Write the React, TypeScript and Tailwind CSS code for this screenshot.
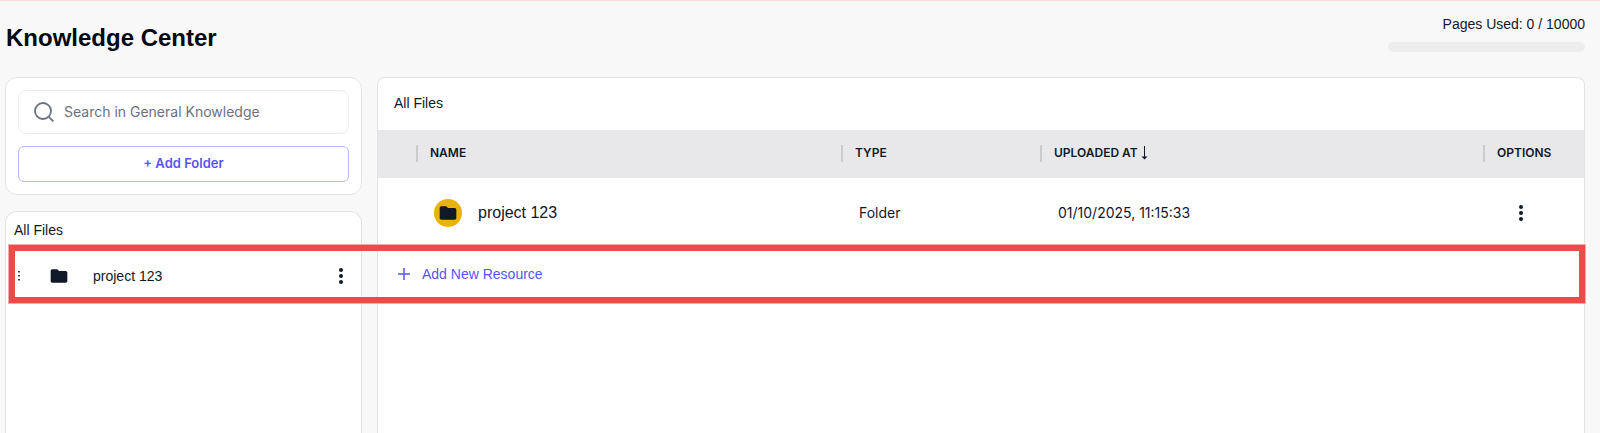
import { MdFolder } from 'react-icons/md'

const files = [{ name: 'project 123', type: 'Folder', uploadedAt: '01/10/2025, 11:15:33' }]

function Dots({ className }: { className?: string }) {
  return (
    <svg viewBox="0 0 4 16" className={className} fill="currentColor" aria-hidden="true">
      <circle cx="2" cy="2" r="2" />
      <circle cx="2" cy="8" r="2" />
      <circle cx="2" cy="14" r="2" />
    </svg>
  )
}

function GripDots() {
  return (
    <svg viewBox="0 0 2 10" className="w-[2px] h-[10px] ml-1" fill="currentColor" aria-hidden="true">
      <path d="M.2 0h1.6v1.6H.2zM.2 4h1.6v1.6H.2zM.2 8h1.6v1.6H.2z" />
    </svg>
  )
}

function SearchIcon() {
  return (
    <svg viewBox="0 0 20 20" className="w-5 h-5 shrink-0 text-gray-500" fill="none" stroke="currentColor" strokeWidth="1.8" aria-hidden="true">
      <circle cx="9" cy="9" r="8" />
      <path d="M14.8 14.8 19.4 19.4" />
    </svg>
  )
}

function HeaderCell({ label, sorted }: { label: string; sorted?: boolean }) {
  return (
    <th scope="col" className="p-0 font-semibold text-left">
      <div className="flex items-center h-12 pb-[2px]">
        <span className="w-[2px] h-[17px] mr-3 bg-[#cbcbcd]" />
        <span>{label}</span>
        {sorted && (
          <svg viewBox="0 0 8 14" className="w-2 h-[14px] ml-[2px]" fill="none" stroke="#111827" aria-hidden="true">
            <path d="M4.5 0v13" />
            <path d="M1.5 10.5h6l-3 3z" fill="#111827" stroke="none" />
          </svg>
        )}
      </div>
    </th>
  )
}

export default function App() {
  return (
    <div className="relative min-h-screen flex flex-col bg-[#f8f8f8] border-t border-[#f9dcdc] pl-[5px] pr-[15px] text-sm text-gray-900 font-['Liberation_Sans',Arial,sans-serif]">
      <header className="flex justify-between items-start h-[76px]">
        <h1 className="pl-px pt-[21px] text-2xl font-bold text-[#030712]">Knowledge Center</h1>
        <div className="w-[197px] pt-[13px]">
          <p className="text-right">Pages Used: 0 / 10000</p>
          <div className="mt-2 h-[10px] rounded-full bg-[#ededed]" />
        </div>
      </header>

      <div className="flex-1 flex gap-[15px]">
        <aside className="w-[357px] shrink-0 flex flex-col gap-4">
          <div className="flex flex-col gap-3 p-3 bg-white border border-[#e4e4e7] rounded-xl">
            <label className="flex items-center gap-[10px] h-11 px-[15px] border border-[#eeeeef] rounded-lg">
              <SearchIcon />
              <input
                type="text"
                aria-label="Search in General Knowledge"
                placeholder="Search in General Knowledge"
                className="flex-1 min-w-0 outline-none font-['Inter',sans-serif] placeholder:text-gray-500"
              />
            </label>
            <button type="button" className="h-9 pb-[2px] border border-[#b6b8ff] rounded-md text-[13px] font-semibold text-[#5754ff] font-['Inter',sans-serif]">
              + Add Folder
            </button>
          </div>

          <div className="flex-1 px-2 bg-white border border-b-0 border-[#e4e4e7] rounded-t-xl">
            <p className="pt-2">All Files</p>
            <ul className="pt-1">
              {files.map((file) => (
                <li key={file.name} className="flex items-center h-16">
                  <GripDots />
                  <MdFolder className="w-5 h-5 ml-[29px] text-[#111827]" />
                  <span className="flex-1 ml-6">{file.name}</span>
                  <button type="button" aria-label="Folder options" className="px-[10px]">
                    <Dots className="w-1 h-4" />
                  </button>
                </li>
              ))}
            </ul>
          </div>
        </aside>

        <main className="flex-1 min-w-0 bg-white border border-b-0 border-[#e4e4e7] rounded-t-lg">
          <p className="h-[52px] px-4 leading-[50px]">All Files</p>
          <table className="w-full table-fixed font-['Inter',sans-serif]">
            <colgroup>
              <col className="w-[38px]" />
              <col className="w-[425px]" />
              <col className="w-[199px]" />
              <col />
              <col className="w-[101px]" />
            </colgroup>
            <thead className="bg-[#e8e8ea] text-xs">
              <tr>
                <td />
                <HeaderCell label="NAME" />
                <HeaderCell label="TYPE" />
                <HeaderCell label="UPLOADED AT" sorted />
                <HeaderCell label="OPTIONS" />
              </tr>
            </thead>
            <tbody>
              {files.map((file) => (
                <tr key={file.name} className="h-[70px]">
                  <td />
                  <td className="pl-[18px]">
                    <div className="flex items-center gap-4 text-base font-['Liberation_Sans',Arial,sans-serif]">
                      <span className="flex items-center justify-center w-7 h-7 rounded-full bg-[#eab308]">
                        <MdFolder className="w-5 h-5 text-[#111827]" />
                      </span>
                      {file.name}
                    </div>
                  </td>
                  <td className="pl-[18px]">{file.type}</td>
                  <td className="pl-[18px]">{file.uploadedAt}</td>
                  <td className="pl-[18px]">
                    <button type="button" aria-label="File options" className="flex px-[18px]">
                      <Dots className="w-1 h-4" />
                    </button>
                  </td>
                </tr>
              ))}
            </tbody>
          </table>
          <button type="button" className="flex items-center gap-3 h-[52px] pl-5 text-[#5754ff]">
            <svg viewBox="0 0 12 12" className="w-3 h-3" stroke="currentColor" strokeWidth="1.5" aria-hidden="true">
              <path d="M6 0v12M0 6h12" />
            </svg>
            Add New Resource
          </button>
        </main>
      </div>

      {/* highlight frame over the folder row */}
      <div className="absolute left-2 right-[14px] top-[243px] h-[60px] border border-[#f9a8a8] pointer-events-none">
        <div className="h-full border-6 border-[#eb4b49]" />
      </div>
    </div>
  )
}
